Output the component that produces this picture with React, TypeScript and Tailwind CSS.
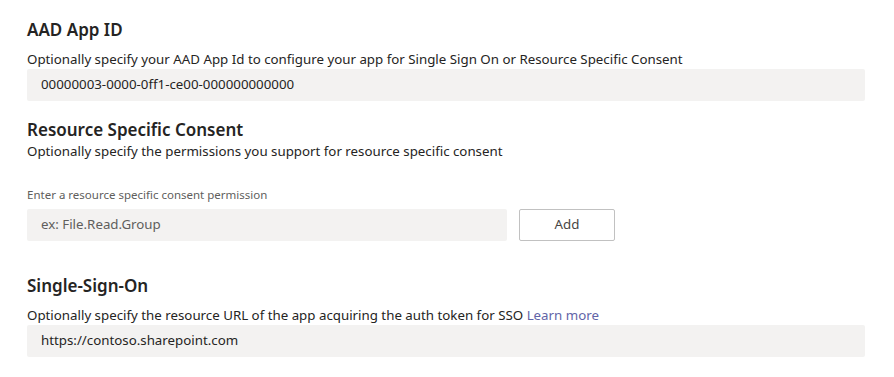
import React from 'react';

const Field: React.FC<{ value: string; placeholder?: boolean; className?: string }> = ({ value, placeholder, className }) => (
  <div className={`h-8 rounded-[2px] bg-[#f3f2f1] px-[14px] flex items-center text-[13.3px] ${placeholder ? 'text-[#605e5c]' : 'text-[#252423]'} ${className ?? ''}`}>
    {value}
  </div>
);

const App: React.FC = () => {
  return (
    <div className="w-[894px] h-[377px] bg-white text-[#252423] pl-[27px] pr-[29px] pt-[18px] font-['Noto_Sans',sans-serif]">
      <h2 className="text-[17px] font-semibold leading-6">AAD App ID</h2>
      <p className="text-[13.3px] mt-[7px] leading-5">
        Optionally specify your AAD App Id to configure your app for Single Sign On or Resource Specific Consent
      </p>
      <Field value="00000003-0000-0ff1-ce00-000000000000" />

      <h2 className="text-[17px] font-semibold leading-6 mt-[17px]">Resource Specific Consent</h2>
      <p className="text-[13.3px] leading-5 -mt-[1px]">Optionally specify the permissions you support for resource specific consent</p>
      <p className="text-[11.5px] text-[#605e5c] mt-[26px] leading-4">Enter a resource specific consent permission</p>
      <div className="flex gap-3 mt-[6px]">
        <Field value="ex: File.Read.Group" placeholder className="w-[480px]" />
        <button className="h-8 w-[96px] rounded-[2px] border border-[#c1c1c1] bg-white text-[13.3px] text-[#484644]">Add</button>
      </div>

      <h2 className="text-[17px] font-semibold leading-6 mt-[33px]">Single-Sign-On</h2>
      <p className="text-[13.3px] mt-[7px] leading-5">
        Optionally specify the resource URL of the app acquiring the auth token for SSO{' '}
        <a className="text-[#6264a7]">Learn more</a>
      </p>
      <Field value="https://contoso.sharepoint.com" />
    </div>
  );
};

export default App;
